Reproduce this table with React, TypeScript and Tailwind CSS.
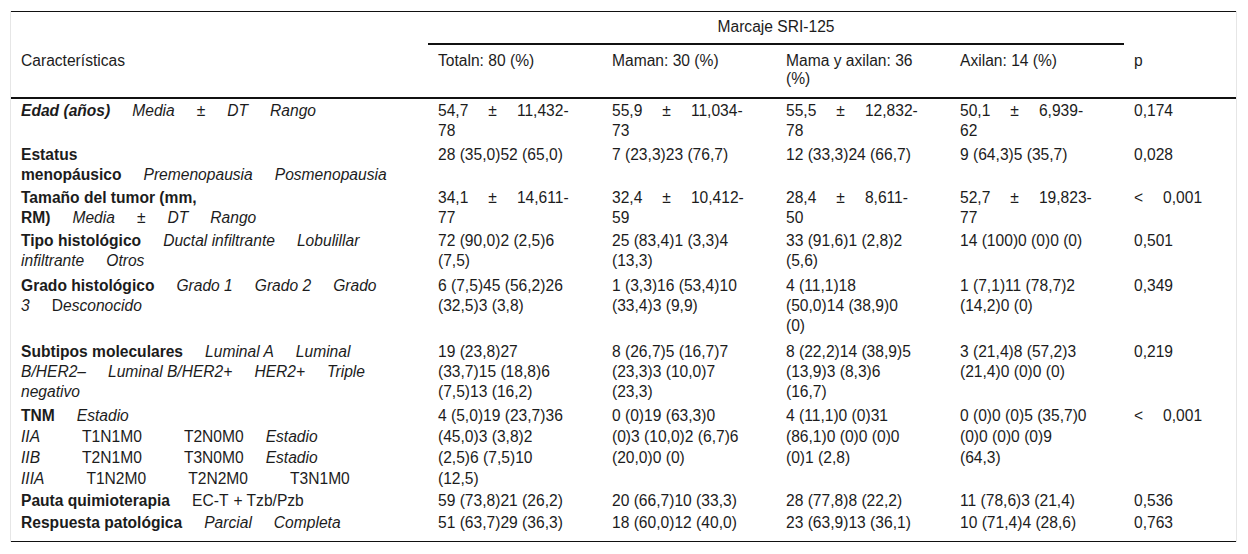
const cols = "grid grid-cols-[417px_174px_174px_174px_174px_112px]";

function Sep({ w = 22 }: { w?: number }) {
  return <span className="inline-block" style={{ width: w }} />;
}

function Spread({ a, b }: { a: string; b: string }) {
  return (
    <span>
      {a}
      <Sep w={20} />±<Sep w={20} />
      {b}
    </span>
  );
}

function Lines({ items, lh }: { items: React.ReactNode[]; lh: string }) {
  return (
    <div className={`pl-[10px] ${lh}`}>
      {items.map((t, i) => (
        <div key={i} className="whitespace-nowrap">
          {t}
        </div>
      ))}
    </div>
  );
}

type Row = {
  h: string;
  lh?: string;
  label: React.ReactNode[];
  values: React.ReactNode[][];
  p: React.ReactNode;
};

const lt = <>&lt;<Sep w={20} />0,001</>;

const rows: Row[] = [
  {
    h: "h-[44px]",
    label: [
      <>
        <b className="italic">Edad (años)</b>
        <Sep /><i>Media</i><Sep /><i>±</i><Sep /><i>DT</i><Sep /><i>Rango</i>
      </>,
    ],
    values: [
      [<Spread a="54,7" b="11,432-" />, "78"],
      [<Spread a="55,9" b="11,034-" />, "73"],
      [<Spread a="55,5" b="12,832-" />, "78"],
      [<Spread a="50,1" b="6,939-" />, "62"],
    ],
    p: "0,174",
  },
  {
    h: "h-[43px]",
    label: [
      <b>Estatus</b>,
      <>
        <b>menopáusico</b>
        <Sep /><i>Premenopausia</i><Sep /><i>Posmenopausia</i>
      </>,
    ],
    values: [["28 (35,0)52 (65,0)"], ["7 (23,3)23 (76,7)"], ["12 (33,3)24 (66,7)"], ["9 (64,3)5 (35,7)"]],
    p: "0,028",
  },
  {
    h: "h-[43px]",
    label: [
      <b>Tamaño del tumor (mm,</b>,
      <>
        <b>RM)</b>
        <Sep /><i>Media</i><Sep /><i>±</i><Sep /><i>DT</i><Sep /><i>Rango</i>
      </>,
    ],
    values: [
      [<Spread a="34,1" b="14,611-" />, "77"],
      [<Spread a="32,4" b="10,412-" />, "59"],
      [<Spread a="28,4" b="8,611-" />, "50"],
      [<Spread a="52,7" b="19,823-" />, "77"],
    ],
    p: lt,
  },
  {
    h: "h-[45px]",
    label: [
      <>
        <b>Tipo histológico</b>
        <Sep /><i>Ductal infiltrante</i><Sep /><i>Lobulillar</i>
      </>,
      <>
        <i>infiltrante</i><Sep /><i>Otros</i>
      </>,
    ],
    values: [
      ["72 (90,0)2 (2,5)6", "(7,5)"],
      ["25 (83,4)1 (3,3)4", "(13,3)"],
      ["33 (91,6)1 (2,8)2", "(5,6)"],
      ["14 (100)0 (0)0 (0)"],
    ],
    p: "0,501",
  },
  {
    h: "h-[66px]",
    label: [
      <>
        <b>Grado histológico</b>
        <Sep /><i>Grado 1</i><Sep /><i>Grado 2</i><Sep /><i>Grado</i>
      </>,
      <>
        <i>3</i><Sep />D<i>esconocido</i>
      </>,
    ],
    values: [
      ["6 (7,5)45 (56,2)26", "(32,5)3 (3,8)"],
      ["1 (3,3)16 (53,4)10", "(33,4)3 (9,9)"],
      ["4 (11,1)18", "(50,0)14 (38,9)0", "(0)"],
      ["1 (7,1)11 (78,7)2", "(14,2)0 (0)"],
    ],
    p: "0,349",
  },
  {
    h: "h-[63px]",
    label: [
      <>
        <b>Subtipos moleculares</b>
        <Sep /><i>Luminal A</i><Sep /><i>Luminal</i>
      </>,
      <>
        <i>B/HER2–</i><Sep /><i>Luminal B/HER2+</i><Sep /><i>HER2+</i><Sep /><i>Triple</i>
      </>,
      <i>negativo</i>,
    ],
    values: [
      ["19 (23,8)27", "(33,7)15 (18,8)6", "(7,5)13 (16,2)"],
      ["8 (26,7)5 (16,7)7", "(23,3)3 (10,0)7", "(23,3)"],
      ["8 (22,2)14 (38,9)5", "(13,9)3 (8,3)6", "(16,7)"],
      ["3 (21,4)8 (57,2)3", "(21,4)0 (0)0 (0)"],
    ],
    p: "0,219",
  },
  {
    h: "h-[86px]",
    lh: "leading-[21px]",
    label: [
      <>
        <b>TNM</b>
        <Sep /><i>Estadio</i>
      </>,
      <>
        <i>IIA</i><Sep w={42} />T1N1M0<Sep w={42} />T2N0M0<Sep /><i>Estadio</i>
      </>,
      <>
        <i>IIB</i><Sep w={42} />T2N1M0<Sep w={42} />T3N0M0<Sep /><i>Estadio</i>
      </>,
      <>
        <i>IIIA</i><Sep w={42} />T1N2M0<Sep w={42} />T2N2M0<Sep w={42} />T3N1M0
      </>,
    ],
    values: [
      ["4 (5,0)19 (23,7)36", "(45,0)3 (3,8)2", "(2,5)6 (7,5)10", "(12,5)"],
      ["0 (0)19 (63,3)0", "(0)3 (10,0)2 (6,7)6", "(20,0)0 (0)"],
      ["4 (11,1)0 (0)31", "(86,1)0 (0)0 (0)0", "(0)1 (2,8)"],
      ["0 (0)0 (0)5 (35,7)0", "(0)0 (0)0 (0)9", "(64,3)"],
    ],
    p: lt,
  },
  {
    h: "h-[22px]",
    label: [
      <>
        <b>Pauta quimioterapia</b>
        <Sep />EC-T<Sep w={5} />+ Tzb/Pzb
      </>,
    ],
    values: [["59 (73,8)21 (26,2)"], ["20 (66,7)10 (33,3)"], ["28 (77,8)8 (22,2)"], ["11 (78,6)3 (21,4)"]],
    p: "0,536",
  },
  {
    h: "h-[30px]",
    label: [
      <>
        <b>Respuesta patológica</b>
        <Sep /><i>Parcial</i><Sep /><i>Completa</i>
      </>,
    ],
    values: [["51 (63,7)29 (36,3)"], ["18 (60,0)12 (40,0)"], ["23 (63,9)13 (36,1)"], ["10 (71,4)4 (28,6)"]],
    p: "0,763",
  },
];

export default function App() {
  return (
    <div className="min-h-screen bg-white pt-[11px] font-['Liberation_Sans',Arial,sans-serif] text-[15.6px] text-[#1c1c1c]">
      <div className="ml-[10px] w-[1227px] border-x border-[#e6e6e6]">
        {/* header */}
        <div className="border-t border-[#111] border-b-2 border-b-[#111]">
          <div className={`${cols} h-[33px]`}>
            <div />
            <div className="col-span-4 border-b-2 border-[#111] pt-[6px] text-center leading-[18px]">
              Marcaje SRI-125
            </div>
            <div />
          </div>
          <div className={`${cols} h-[52px] pt-[7px] leading-[18px]`}>
            <div className="pl-[10px]">Características</div>
            <div className="pl-[10px]">Totaln: 80 (%)</div>
            <div className="pl-[10px]">Maman: 30 (%)</div>
            <div className="pl-[10px] pr-[24px]">Mama y axilan: 36 (%)</div>
            <div className="pl-[10px]">Axilan: 14 (%)</div>
            <div className="pl-[10px]">p</div>
          </div>
        </div>
        {/* body */}
        <div className="border-b border-[#111]">
          {rows.map((r, i) => (
            <div key={i} className={`${cols} ${r.h} pt-[2px]`}>
              <Lines items={r.label} lh={r.lh ?? "leading-[20px]"} />
              {r.values.map((v, j) => (
                <Lines key={j} items={v} lh={r.lh ?? "leading-[20px]"} />
              ))}
              <Lines items={[r.p]} lh={r.lh ?? "leading-[20px]"} />
            </div>
          ))}
        </div>
      </div>
    </div>
  );
}
